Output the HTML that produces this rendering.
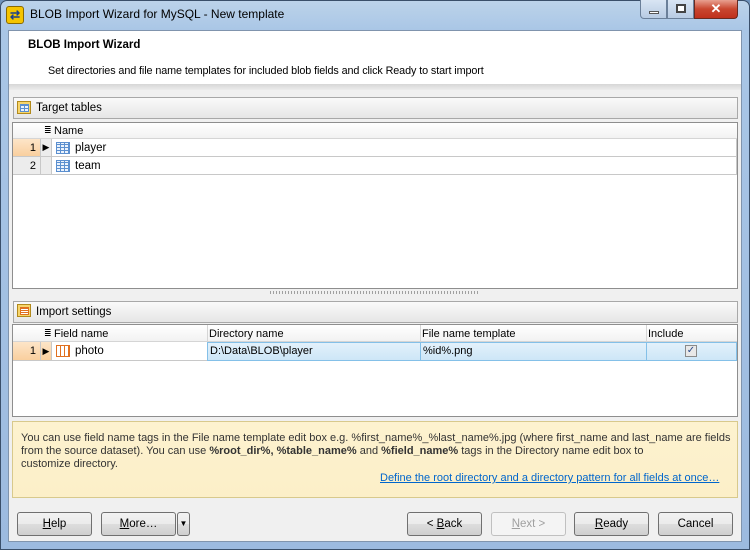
<!DOCTYPE html>
<html><head><meta charset="utf-8"><style>
*{box-sizing:border-box;margin:0;padding:0}
body{width:750px;height:550px;overflow:hidden;font-family:"Liberation Sans",sans-serif;font-size:11px;color:#000;background:#6f93bd;position:relative}
.a{position:absolute}
.frame{left:0;top:0;width:750px;height:550px;background:linear-gradient(180deg,#bcd3ea 0,#a9c6e6 30px,#9cbadf 100%);border:1px solid #3a4f6a;border-radius:7px 7px 0 0}
.client{left:8px;top:30px;width:734px;height:512px;background:#f0f0f0;border:1px solid #8094ad}
.hdr{left:9px;top:31px;width:732px;height:53px;background:#fff}
.band{left:9px;top:84px;width:732px;height:6px;background:linear-gradient(#d6d6d6,#ececec)}
.ph{height:22px;border:1px solid #a8a8a8;background:linear-gradient(#fafafa,#e6e6e6);padding-left:22px;line-height:20px;font-size:11.5px}
.grid{background:#fff;border:1px solid #8e8e8e}
.gh{background:linear-gradient(#fff,#f2f2f2);border-bottom:1px solid #d5d5d5}
.rn{background:#ececec;border-right:1px solid #c8c8c8;border-bottom:1px solid #c8c8c8;text-align:right;padding-right:4px}
.rs{background:linear-gradient(#fde5c8,#f9cf9e)}
.btn{height:24px;border:1px solid #707070;border-radius:3px;background:linear-gradient(#f2f2f2 0,#ebebeb 50%,#dddddd 51%,#cfcfcf 100%);text-align:center;line-height:22px;font-size:11.5px}
.ico{width:14px;height:12px;border:1px solid #5b8fcf;background:repeating-linear-gradient(90deg,transparent 0 3px,#5b8fcf 3px 4px),repeating-linear-gradient(0deg,#eaf2fc 0 2px,#5b8fcf 2px 3px)}
</style></head><body>
<div class="a frame"></div>
<div class="a" style="left:6px;top:6px;width:18px;height:18px;background:#f5c400;border:1px solid #8a6a00;border-radius:3px;color:#1b3f8c;font-weight:bold;font-size:12px;line-height:16px;text-align:center">⇄</div>
<div class="a" style="left:30px;top:7px;font-size:12px;color:#000">BLOB Import Wizard for MySQL - New template</div>
<div class="a" style="left:640px;top:0;width:27px;height:19px;border:1px solid #6a7f99;border-top:0;border-radius:0 0 0 4px;background:linear-gradient(#d9e5f3,#b7cbe3)"><div class="a" style="left:8px;top:11px;width:10px;height:3px;background:#fff;border:1px solid #555"></div></div>
<div class="a" style="left:667px;top:0;width:27px;height:19px;border:1px solid #6a7f99;border-top:0;background:linear-gradient(#d9e5f3,#b7cbe3)"><div class="a" style="left:8px;top:4px;width:10px;height:9px;border:2px solid #444;background:#fff"></div></div>
<div class="a" style="left:694px;top:0;width:44px;height:19px;border:1px solid #6a2a20;border-top:0;border-radius:0 0 4px 0;background:linear-gradient(#e8a090,#c9462f 50%,#c0301c);color:#fff;font-weight:bold;font-size:13px;text-align:center;line-height:17px">✕</div>
<div class="a client"></div>
<div class="a hdr"></div>
<div class="a" style="left:28px;top:39px;font-weight:bold;font-size:11.5px">BLOB Import Wizard</div>
<div class="a" style="left:48px;top:65px;font-size:10.8px;letter-spacing:-0.1px">Set directories and file name templates for included blob fields and click Ready to start import</div>
<div class="a band"></div>

<div class="a ph" style="left:13px;top:97px;width:725px">Target tables</div>
<div class="a" style="left:17px;top:101px;width:14px;height:13px;background:#f7d56b;border:1px solid #b28a1c"><div class="a ico" style="left:2px;top:2px;width:9px;height:8px"></div></div>
<div class="a grid" style="left:12px;top:122px;width:726px;height:167px"></div>
<div class="a gh" style="left:13px;top:123px;width:724px;height:16px"></div>
<div class="a" style="left:44px;top:125px;font-size:9px;line-height:10px">≣</div>
<div class="a" style="left:54px;top:125px">Name</div>
<div class="a rn rs" style="left:13px;top:139px;width:28px;height:18px;line-height:18px">1</div>
<div class="a rn" style="left:41px;top:139px;width:11px;height:18px;line-height:17px;font-size:9px;text-align:center;padding:0">▶</div>
<div class="a" style="left:52px;top:139px;width:685px;height:18px;border-bottom:1px solid #c8c8c8;border-right:1px solid #c8c8c8"></div>
<div class="a ico" style="left:56px;top:142px"></div>
<div class="a" style="left:75px;top:142px;font-size:11.5px">player</div>
<div class="a rn" style="left:13px;top:157px;width:28px;height:18px;line-height:18px">2</div>
<div class="a rn" style="left:41px;top:157px;width:11px;height:18px"></div>
<div class="a" style="left:52px;top:157px;width:685px;height:18px;border-bottom:1px solid #c8c8c8;border-right:1px solid #c8c8c8"></div>
<div class="a ico" style="left:56px;top:160px"></div>
<div class="a" style="left:75px;top:160px;font-size:11.5px">team</div>

<div class="a" style="left:270px;top:291px;width:210px;height:3px;background:repeating-linear-gradient(90deg,#a0a0a0 0 1px,transparent 1px 3px)"></div>

<div class="a ph" style="left:13px;top:301px;width:725px">Import settings</div>
<div class="a" style="left:17px;top:304px;width:14px;height:13px;background:#f7d56b;border:1px solid #b28a1c"><div class="a" style="left:2px;top:2px;width:9px;height:8px;border:1px solid #e07020;background:repeating-linear-gradient(0deg,#fff 0 1px,#e07020 1px 2px)"></div></div>
<div class="a grid" style="left:12px;top:324px;width:726px;height:93px"></div>
<div class="a gh" style="left:13px;top:325px;width:724px;height:17px"></div>
<div class="a" style="left:44px;top:328px;font-size:9px;line-height:10px">≣</div>
<div class="a" style="left:54px;top:328px">Field name</div>
<div class="a" style="left:207px;top:325px;height:17px;border-left:1px solid #d5d5d5"></div>
<div class="a" style="left:209px;top:328px">Directory name</div>
<div class="a" style="left:420px;top:325px;height:17px;border-left:1px solid #d5d5d5"></div>
<div class="a" style="left:422px;top:328px">File name template</div>
<div class="a" style="left:646px;top:325px;height:17px;border-left:1px solid #d5d5d5"></div>
<div class="a" style="left:648px;top:328px">Include</div>
<div class="a rn rs" style="left:13px;top:342px;width:28px;height:19px;line-height:19px">1</div>
<div class="a rn rs" style="left:41px;top:342px;width:11px;height:19px;line-height:18px;font-size:9px;text-align:center;padding:0">▶</div>
<div class="a" style="left:52px;top:342px;width:155px;height:19px;border-bottom:1px solid #c8c8c8"></div>
<div class="a" style="left:56px;top:345px;width:14px;height:12px;border:1px solid #e07020;background:repeating-linear-gradient(90deg,#fff 0 3px,#e07020 3px 4px),#fff"></div>
<div class="a" style="left:75px;top:345px;font-size:11.5px">photo</div>
<div class="a" style="left:207px;top:342px;width:530px;height:19px;background:linear-gradient(#e3f1fb,#cde6f7);border:1px solid #84c0e8"></div>
<div class="a" style="left:420px;top:342px;width:1px;height:19px;background:#84c0e8"></div>
<div class="a" style="left:646px;top:342px;width:1px;height:19px;background:#84c0e8"></div>
<div class="a" style="left:210px;top:345px">D:\Data\BLOB\player</div>
<div class="a" style="left:423px;top:345px">%id%.png</div>
<div class="a" style="left:685px;top:345px;width:12px;height:12px;border:1px solid #8a8a8a;background:#e8e8e8;font-size:10px;line-height:10px;text-align:center;color:#2a4a8a">✓</div>

<div class="a" style="left:12px;top:421px;width:726px;height:77px;background:linear-gradient(#fdf2cf,#fcefc8);border:1px solid #d8c98c"></div>
<div class="a" style="left:21px;top:432px;width:715px;line-height:13px;color:#333;white-space:nowrap">You can use field name tags in the File name template edit box e.g. %first_name%_%last_name%.jpg (where first_name and last_name are fields<br>from the source dataset). You can use <b>%root_dir%, %table_name%</b> and <b>%field_name%</b> tags in the Directory name edit box to<br>customize directory.</div>
<div class="a" style="left:380px;top:472px;color:#0066cc;text-decoration:underline">Define the root directory and a directory pattern for all fields at once…</div>

<div class="a btn" style="left:17px;top:512px;width:75px"><u>H</u>elp</div>
<div class="a btn" style="left:101px;top:512px;width:75px"><u>M</u>ore…</div>
<div class="a btn" style="left:177px;top:512px;width:13px;font-size:8px">▼</div>
<div class="a btn" style="left:407px;top:512px;width:75px">&lt; <u>B</u>ack</div>
<div class="a btn" style="left:491px;top:512px;width:75px;color:#a0a0a0;border-color:#c0c0c0;background:#f4f4f4"><u>N</u>ext &gt;</div>
<div class="a btn" style="left:574px;top:512px;width:75px"><u>R</u>eady</div>
<div class="a btn" style="left:658px;top:512px;width:75px">Cancel</div>
</body></html>
